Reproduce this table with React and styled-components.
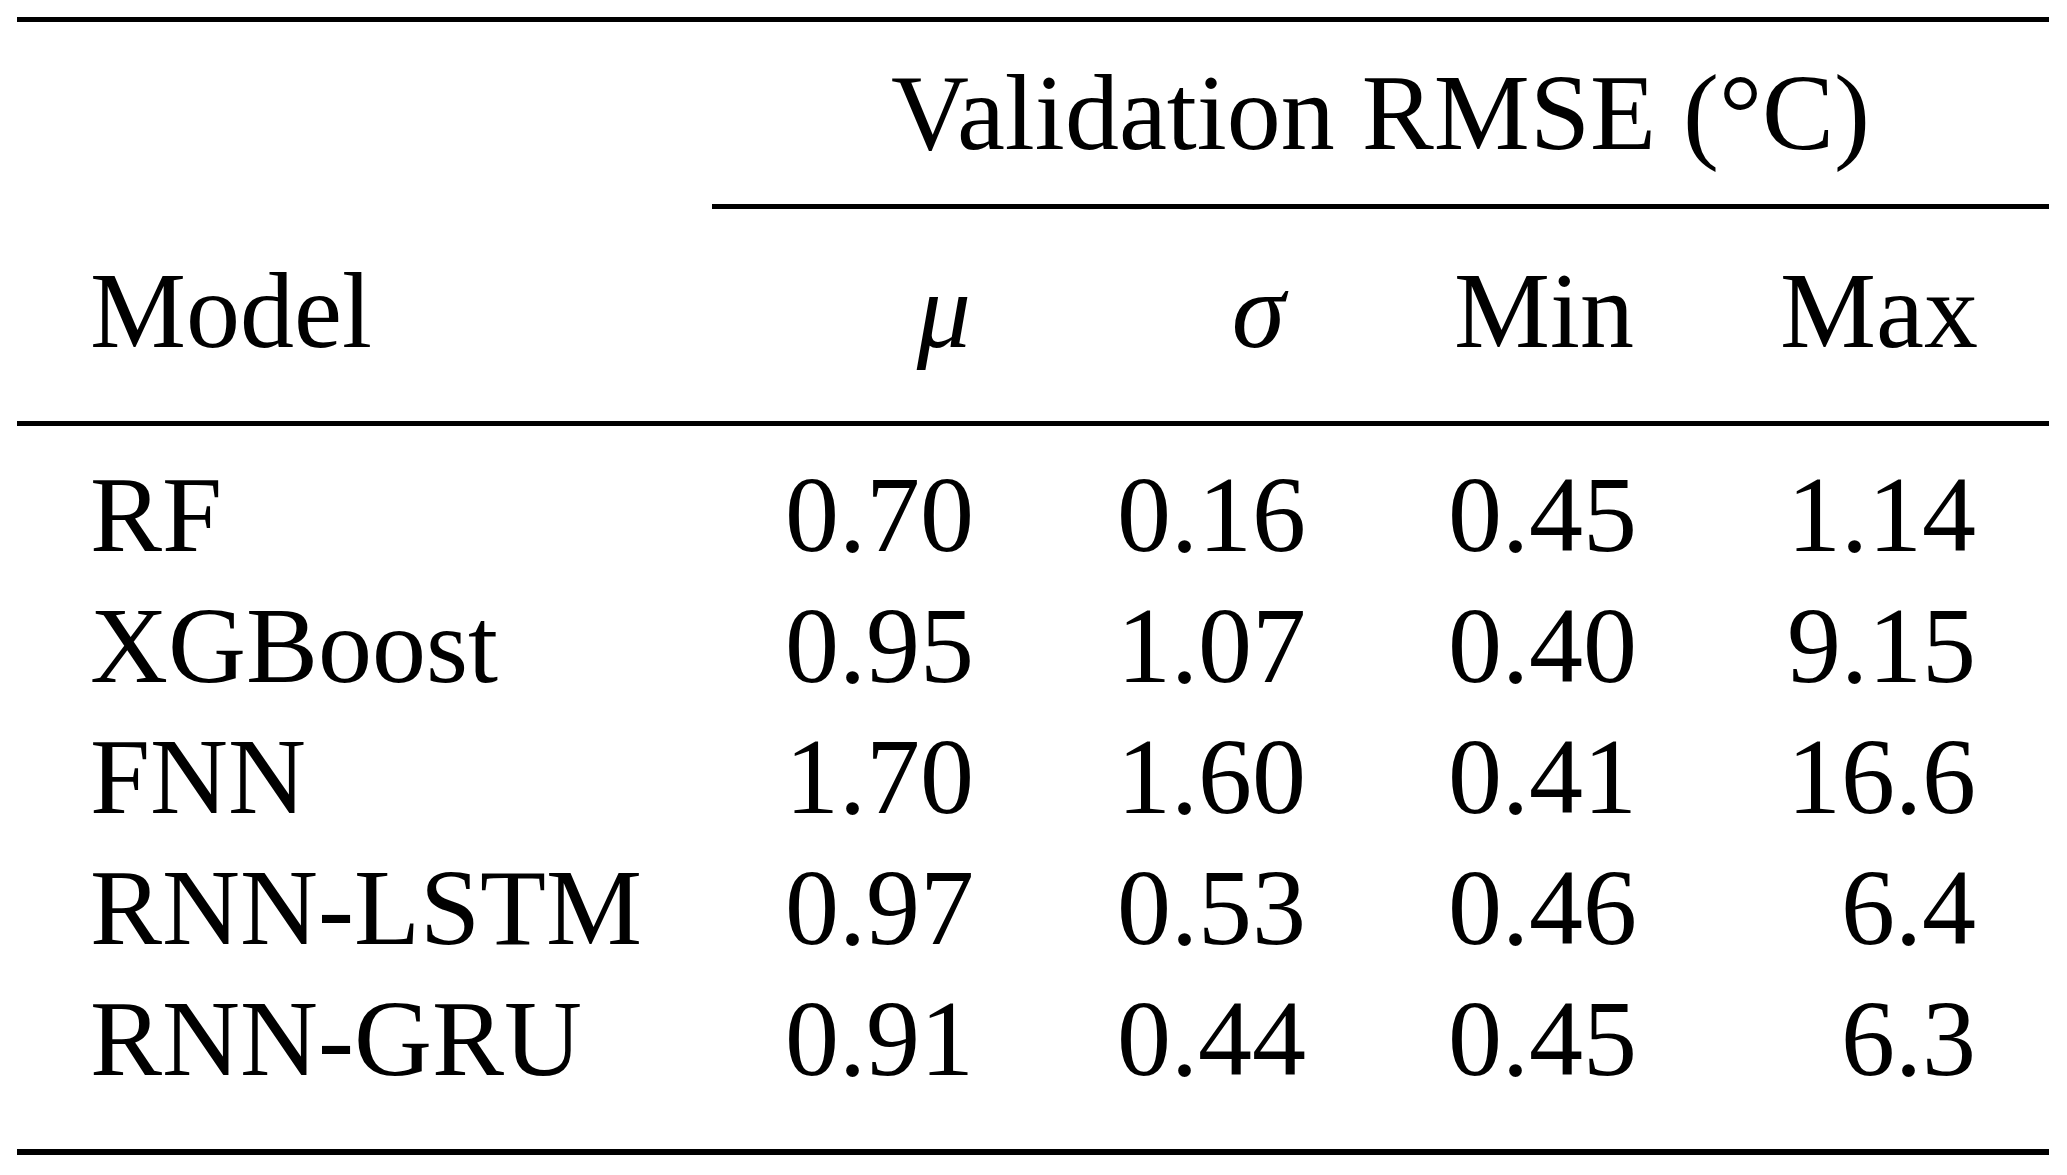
import React from "react";
import styled, { createGlobalStyle } from "styled-components";

const rows = [
  { model: "RF", mu: "0.70", sigma: "0.16", min: "0.45", max: "1.14" },
  { model: "XGBoost", mu: "0.95", sigma: "1.07", min: "0.40", max: "9.15" },
  { model: "FNN", mu: "1.70", sigma: "1.60", min: "0.41", max: "16.6" },
  { model: "RNN-LSTM", mu: "0.97", sigma: "0.53", min: "0.46", max: "6.4" },
  { model: "RNN-GRU", mu: "0.91", sigma: "0.44", min: "0.45", max: "6.3" },
];

const App = () => {
  return (
    <Page>
      <GlobalStyle />
      <Table>
        <Rule $from={1} $thick={5} $top={17} />

        <Cell $col="2 / span 4" $center $pt={25} $pb={26}>
          Validation RMSE (°C)
        </Cell>
        <Rule $from={2} $thick={5} $top={0} />

        <Cell $pt={36} $pb={45}>Model</Cell>
        <Cell $right $pt={36} $pb={45}>
          <Greek>μ</Greek>
        </Cell>
        <Cell $right $pt={36} $pb={45}>
          <Greek $shift={17}>σ</Greek>
        </Cell>
        <Cell $right $pt={36} $pb={45}>Min</Cell>
        <Cell $right $pt={36} $pb={45}>Max</Cell>
        <Rule $from={1} $thick={5} $top={0} />

        <Spacer $h={23} />
        {rows.map((r) => (
          <React.Fragment key={r.model}>
            <Cell>{r.model}</Cell>
            <Cell $right>{r.mu}</Cell>
            <Cell $right>{r.sigma}</Cell>
            <Cell $right>{r.min}</Cell>
            <Cell $right>{r.max}</Cell>
          </React.Fragment>
        ))}
        <Spacer $h={45} />
        <Rule $from={1} $thick={6} $top={0} />
      </Table>
    </Page>
  );
};

const GlobalStyle = createGlobalStyle`
  html, body {
    margin: 0;
    padding: 0;
    background: #ffffff;
  }
`;

const Page = styled.div`
  width: 2067px;
  height: 1175px;
  background: #ffffff;
  padding-left: 17px;
  box-sizing: border-box;
  overflow: hidden;
`;

const Table = styled.div`
  display: grid;
  grid-template-columns: 695px 332px 331px 332px 342px;
  width: 2032px;
  font-family: "Liberation Serif", "Times New Roman", serif;
  font-size: 108px;
  line-height: 131px;
  color: #000000;
`;

const Cell = styled.div`
  grid-column: ${(props) => props.$col || "auto"};
  padding: ${(props) => props.$pt || 0}px 73px ${(props) => props.$pb || 0}px;
  text-align: ${(props) => (props.$center ? "center" : props.$right ? "right" : "left")};
  white-space: nowrap;
`;

const Greek = styled.span`
  font-style: italic;
  margin-right: ${(props) => props.$shift || 0}px;
`;

const Rule = styled.div`
  grid-column: ${(props) => props.$from} / -1;
  height: ${(props) => props.$thick}px;
  margin-top: ${(props) => props.$top}px;
  background: #000000;
`;

const Spacer = styled.div`
  grid-column: 1 / -1;
  height: ${(props) => props.$h}px;
`;

export default App;
